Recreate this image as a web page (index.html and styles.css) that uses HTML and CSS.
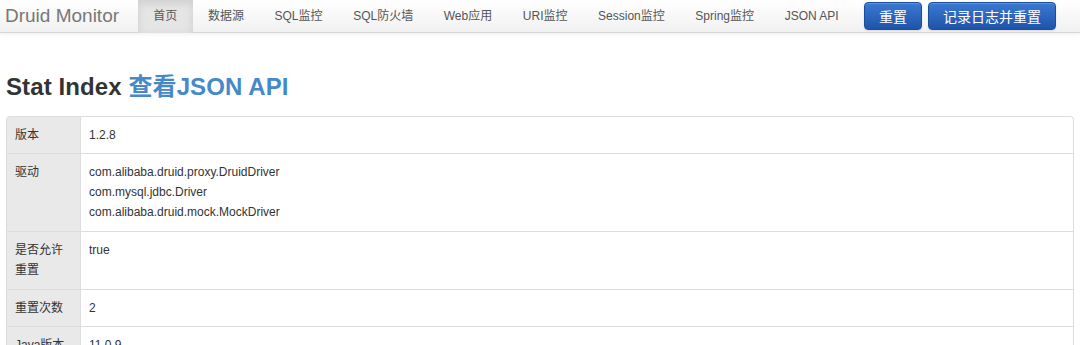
FILE: index.html
```html
<!DOCTYPE html>
<html lang="zh">
<head>
<meta charset="utf-8">
<title>Druid Stat Index</title>
<link rel="stylesheet" href="styles.css">
</head>
<body>
<header class="navbar">
  <a class="brand" href="#">Druid Monitor</a>
  <nav class="nav">
    <a class="nav-item active" href="#">首页</a>
    <a class="nav-item" href="#">数据源</a>
    <a class="nav-item" href="#">SQL监控</a>
    <a class="nav-item" href="#">SQL防火墙</a>
    <a class="nav-item" href="#">Web应用</a>
    <a class="nav-item" href="#">URI监控</a>
    <a class="nav-item" href="#">Session监控</a>
    <a class="nav-item" href="#">Spring监控</a>
    <a class="nav-item" href="#">JSON API</a>
  </nav>
  <div class="actions">
    <button class="btn">重置</button>
    <button class="btn">记录日志并重置</button>
  </div>
</header>
<main class="container">
  <h2 class="title">Stat Index <a class="title-link" href="#">查看JSON API</a></h2>
  <table class="stat-table">
    <colgroup><col class="col-label"><col></colgroup>
    <tbody>
      <tr><th>版本</th><td>1.2.8</td></tr>
      <tr class="tall"><th>驱动</th><td>com.alibaba.druid.proxy.DruidDriver<br>com.mysql.jdbc.Driver<br>com.alibaba.druid.mock.MockDriver</td></tr>
      <tr class="tall"><th>是否允许重置</th><td>true</td></tr>
      <tr><th>重置次数</th><td>2</td></tr>
      <tr><th>Java版本</th><td>11.0.9</td></tr>
    </tbody>
  </table>
</main>
</body>
</html>
```
FILE: styles.css
```css
html, body {
  margin: 0;
  padding: 0;
  background: #fff;
}
body {
  font-family: "Liberation Sans", Arial, "Noto Sans CJK SC", sans-serif;
  font-size: 12px;
  line-height: 20px;
  color: #333;
}
a { text-decoration: none; }

.navbar {
  display: flex;
  align-items: center;
  height: 32px;
  background: linear-gradient(to bottom, #ffffff, #f1f1f1);
  border-bottom: 1px solid #d6d6d6;
  box-shadow: 0 1px 4px rgba(0, 0, 0, 0.07);
}
.brand {
  box-sizing: border-box;
  width: 138px;
  padding-left: 5px;
  font-size: 19px;
  font-weight: 300;
  color: #777;
  line-height: 32px;
}
.nav {
  display: flex;
  height: 32px;
}
.nav-item {
  display: block;
  padding: 0 15.3px;
  line-height: 32px;
  font-size: 12px;
  color: #555;
}
.nav-item.active {
  background: #e5e5e5;
  box-shadow: inset 0 3px 8px rgba(0, 0, 0, 0.1);
  height: 33px;
}
.actions {
  display: flex;
  gap: 6px;
  margin-left: 10px;
}
.btn {
  box-sizing: border-box;
  height: 28px;
  padding: 0 14px;
  font-family: "Liberation Sans", Arial, "Noto Sans CJK SC", sans-serif;
  font-size: 14px;
  color: #fff;
  background: linear-gradient(to bottom, #3b79d2, #1e54aa);
  border: 1px solid #1c4c9c;
  border-radius: 4px;
  box-shadow: inset 0 1px 0 rgba(255, 255, 255, 0.2), 0 1px 2px rgba(0, 0, 0, 0.1);
}

.container {
  padding: 0 6px;
}
.title {
  margin: 39px 0 14px;
  font-size: 24px;
  line-height: 30px;
  height: 30px;
  font-weight: bold;
  color: #333;
  letter-spacing: 0.1px;
}
.title-link {
  color: #4689c8;
}

.stat-table {
  width: 100%;
  table-layout: fixed;
  border-collapse: separate;
  border-spacing: 0;
  border: 1px solid #ddd;
  border-left: 0;
  border-radius: 4px;
}
.col-label { width: 74px; }
.stat-table th,
.stat-table td {
  padding: 8px;
  line-height: 20px;
  text-align: left;
  vertical-align: top;
  border-top: 1px solid #ddd;
  border-left: 1px solid #ddd;
}
.stat-table tr.tall th,
.stat-table tr.tall td {
  padding-bottom: 9px;
}
.stat-table tr:first-child th,
.stat-table tr:first-child td {
  border-top: 0;
}
.stat-table th {
  font-weight: normal;
  background: #e9e9e9;
}
.stat-table tr:first-child th {
  border-top-left-radius: 4px;
}
```
